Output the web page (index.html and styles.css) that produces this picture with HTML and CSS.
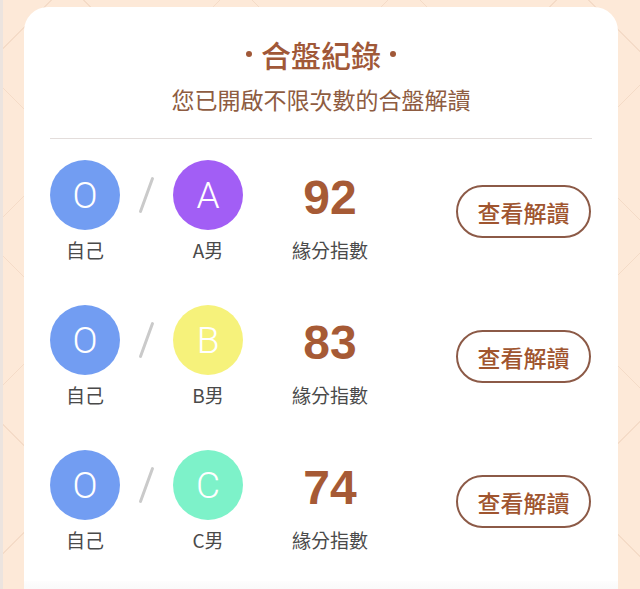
FILE: index.html
```html
<!DOCTYPE html>
<html lang="zh-Hant">
<head>
    <meta charset="UTF-8">
    <meta name="viewport" content="width=device-width, initial-scale=1.0">
    <title>合盤紀錄</title>
    <link rel="stylesheet" href="styles.css">
</head>
<body>
    <div class="page">
        <div class="card">
            <h2 class="card-title">合盤紀錄</h2>
            <p class="card-subtitle">您已開啟不限次數的合盤解讀</p>

            <div class="record-list">
                <div class="record">
                    <div class="person">
                        <div class="avatar type-o">O</div>
                        <span class="person-name">自己</span>
                    </div>
                    <div class="slash"></div>
                    <div class="person">
                        <div class="avatar type-a">A</div>
                        <span class="person-name">A男</span>
                    </div>
                    <div class="score">
                        <div class="score-value">92</div>
                        <span class="person-name">緣分指數</span>
                    </div>
                    <button class="read-btn">查看解讀</button>
                </div>

                <div class="record">
                    <div class="person">
                        <div class="avatar type-o">O</div>
                        <span class="person-name">自己</span>
                    </div>
                    <div class="slash"></div>
                    <div class="person">
                        <div class="avatar type-b">B</div>
                        <span class="person-name">B男</span>
                    </div>
                    <div class="score">
                        <div class="score-value">83</div>
                        <span class="person-name">緣分指數</span>
                    </div>
                    <button class="read-btn">查看解讀</button>
                </div>

                <div class="record">
                    <div class="person">
                        <div class="avatar type-o">O</div>
                        <span class="person-name">自己</span>
                    </div>
                    <div class="slash"></div>
                    <div class="person">
                        <div class="avatar type-c">C</div>
                        <span class="person-name">C男</span>
                    </div>
                    <div class="score">
                        <div class="score-value">74</div>
                        <span class="person-name">緣分指數</span>
                    </div>
                    <button class="read-btn">查看解讀</button>
                </div>
            </div>

            <div class="card-foot"></div>
        </div>
    </div>
</body>
</html>
```

FILE: styles.css
```css
* {
    margin: 0;
    padding: 0;
    box-sizing: border-box;
}

body {
    font-family: 'Noto Sans CJK TC', 'Liberation Sans', sans-serif;
    background-color: #fde9d8;
    background-image:
        repeating-linear-gradient(45deg, transparent 0, transparent 118px, rgba(214, 170, 140, 0.22) 118px, rgba(214, 170, 140, 0.22) 119px),
        repeating-linear-gradient(-45deg, transparent 0, transparent 118px, rgba(214, 170, 140, 0.22) 118px, rgba(214, 170, 140, 0.22) 119px);
    border-left: 3px solid #ece4df;
    height: 589px;
    overflow: hidden;
}

.page {
    padding: 7px 22px 0 21px;
}

.card {
    background: #fff;
    border-radius: 24px 24px 0 0;
    padding: 27px 26px 0;
    display: flex;
    flex-direction: column;
}

.card-title {
    display: flex;
    align-items: center;
    justify-content: center;
    gap: 9px;
    font-size: 30px;
    line-height: 40px;
    font-weight: 500;
    color: #a05838;
}

.card-title:before,
.card-title:after {
    content: '';
    width: 6px;
    height: 6px;
    border-radius: 50%;
    background: #a05838;
}

.card-subtitle {
    margin-top: 9px;
    text-align: center;
    font-size: 23px;
    line-height: 32px;
    color: #8e5c41;
}

.record-list {
    margin-top: 23px;
    border-top: 1px solid #e3dddb;
    padding-top: 21px;
    display: flex;
    flex-direction: column;
    gap: 42px;
}

.record {
    display: flex;
    align-items: center;
}

.person {
    width: 70px;
    display: flex;
    flex-direction: column;
    align-items: center;
    gap: 7px;
}

.avatar {
    width: 70px;
    height: 70px;
    border-radius: 50%;
    display: flex;
    align-items: center;
    justify-content: center;
    color: #fff;
    font-family: 'Roboto', 'Liberation Sans', sans-serif;
    font-weight: 300;
    font-size: 37px;
}

.type-o { background: #729df2; }
.type-a { background: #a25ef5; }
.type-b { background: #f6f27b; }
.type-c { background: #7df2c9; }

.person-name {
    font-size: 19px;
    line-height: 26px;
    color: #4a4a4a;
    white-space: nowrap;
}

.slash {
    width: 53px;
    height: 103px;
    position: relative;
}

.slash:after {
    content: '';
    position: absolute;
    left: 25px;
    top: 16px;
    width: 3px;
    height: 38px;
    border-radius: 2px;
    background: #cacaca;
    transform: rotate(20deg);
}

.score {
    width: 100px;
    margin-left: 37px;
    display: flex;
    flex-direction: column;
    align-items: center;
    gap: 7px;
}

.score-value {
    height: 70px;
    padding-top: 3px;
    font-family: 'Liberation Sans', sans-serif;
    font-weight: bold;
    font-size: 48px;
    line-height: 70px;
    color: #a65a35;
}

.read-btn {
    margin-left: auto;
    margin-right: 1px;
    width: 135px;
    height: 53px;
    border: 2px solid #8c5a47;
    border-radius: 27px;
    background: #fff;
    font-family: 'Noto Sans CJK TC', sans-serif;
    font-size: 23px;
    font-weight: 500;
    color: #a0552f;
    cursor: pointer;
}

/* light strip under the last record */
.card-foot {
    margin: 28px -26px 0;
    height: 20px;
    background: linear-gradient(#fdfdfd, #f5f5f5);
}
```
